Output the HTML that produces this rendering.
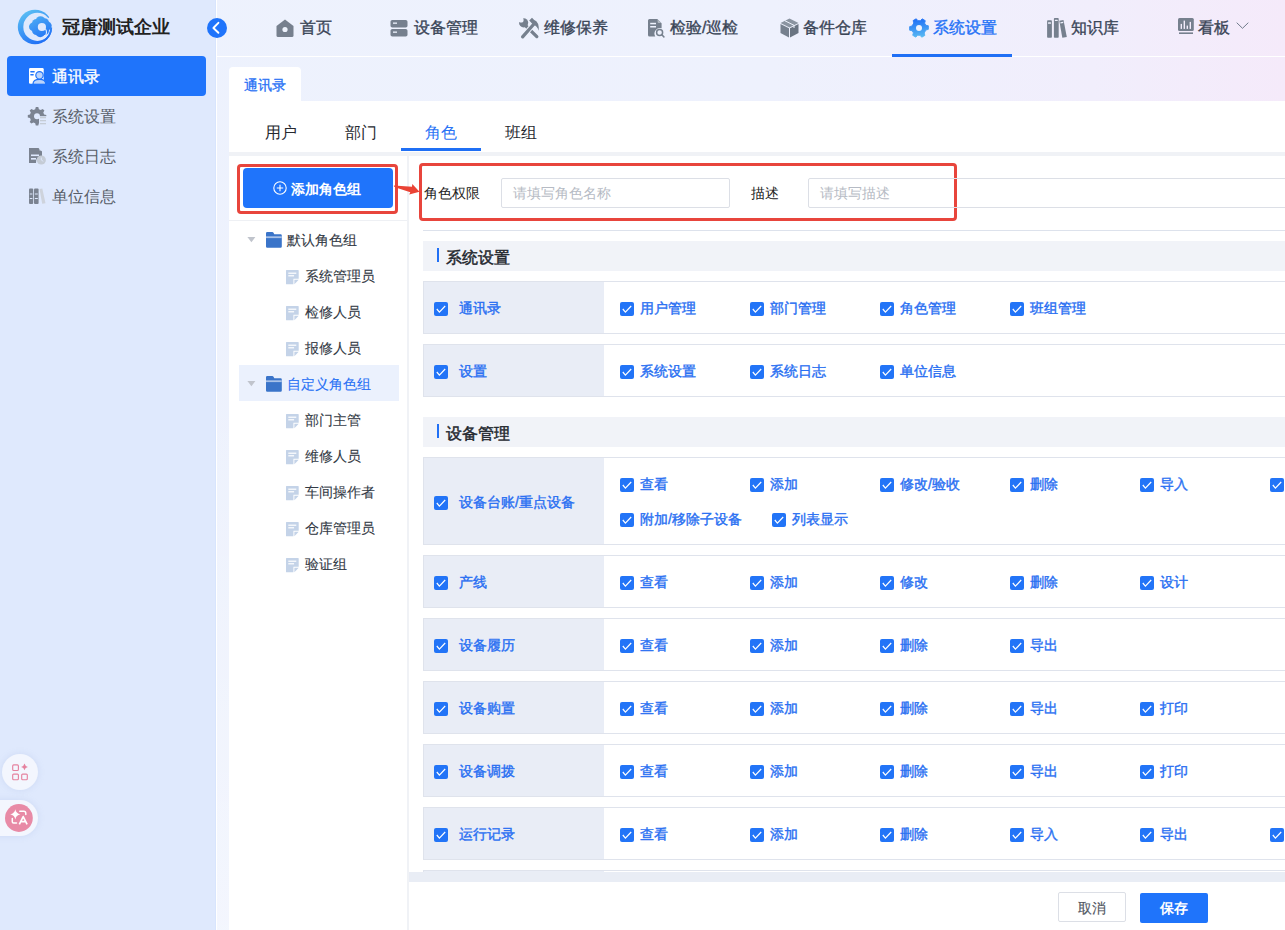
<!DOCTYPE html>
<html><head><meta charset="utf-8">
<style>
*{box-sizing:border-box;margin:0;padding:0}
html,body{width:1285px;height:930px;overflow:hidden}
body{font-family:"Liberation Sans",sans-serif;position:relative;background:linear-gradient(180deg,rgba(255,255,255,0) 0%,rgba(255,255,255,0) 40%,rgba(255,255,255,.35) 100%),linear-gradient(90deg,#edf2fd 0%,#eef1fd 60%,#f1eefc 85%,#f5eafa 100%)}
.abs{position:absolute}
#side{left:0;top:0;width:216px;height:930px;background:#dfe9fd;border-right:1px solid #d8e5fd}
#vline{left:216px;top:0;width:1px;height:930px;background:#fff}
#hline{left:217px;top:56px;width:1068px;height:1px;background:#fff}
.logo-t{left:62px;top:14px;font-size:18px;font-weight:bold;color:#222;line-height:26px;letter-spacing:0px}
.mi{left:7px;width:199px;height:40px;border-radius:4px;color:#575d68;font-size:16px;line-height:40px}
.mi .t{position:absolute;left:45px;top:0}
.mi svg{position:absolute;left:22px;top:12px}
.mi.on{background:#1f74fb;color:#fff}
.nav{top:14px;height:28px;font-size:16px;line-height:28px;color:#3a4557;white-space:nowrap;-webkit-text-stroke:0.35px currentColor}
.nav svg{position:absolute;top:5px}
.nav .t{position:absolute;top:0}
/*GEN*/
.w{background:#fff}
.tt{font-size:16px;line-height:24px;color:#26292f;white-space:nowrap}
.tr{font-size:14px;line-height:20px;color:#333a45;white-space:nowrap;-webkit-text-stroke:0.1px currentColor}
.cb{width:14px;height:14px;border-radius:2px;background:#2274f7}
.cb svg{position:absolute;left:0;top:0}
.pl{font-size:14px;line-height:20px;color:#2a70f2;white-space:nowrap;-webkit-text-stroke:0.4px #2a70f2}
.row{left:423px;width:880px;border:1px solid #dfe3ec;background:#fff}
.rowl{left:424px;width:180px;background:#e9edf6}
.hdr{left:423px;width:870px;height:30px;background:#f1f3f8}
.hdr .bar{position:absolute;left:14px;top:7px;width:2px;height:14px;background:#2170f5}
.hdr .t{position:absolute;left:23px;top:5px;font-size:16px;line-height:24px;color:#23272e;-webkit-text-stroke:0.45px #23272e}
/*/GEN*/</style></head><body>
<div id="side" class="abs"></div>
<div id="vline" class="abs"></div>
<div id="hline" class="abs"></div>
<!-- logo -->
<svg class="abs" style="left:17px;top:9px" width="36" height="36" viewBox="0 0 36 36">
<defs><linearGradient id="lg" gradientUnits="userSpaceOnUse" x1="6" y1="0" x2="24" y2="36"><stop offset="0" stop-color="#5fc4f3"/><stop offset="1" stop-color="#1d6cf6"/></linearGradient>
<mask id="lm"><rect width="36" height="36" fill="#fff"/><circle cx="20.4" cy="17.9" r="14.1" fill="#000"/><path d="M18 18 L38 4.5 L38 19Z" fill="#000"/></mask>
<mask id="bm"><rect width="36" height="36" fill="#fff"/><circle cx="24.9" cy="18" r="4.1" fill="#000"/></mask></defs>
<circle cx="18" cy="18" r="17.2" fill="url(#lg)" mask="url(#lm)"/>
<path d="M34.2 18.5 A16.3 16.3 0 0 1 26.5 32" stroke="url(#lg)" stroke-width="1.9" fill="none"/>
<g fill="url(#lg)" mask="url(#bm)"><circle cx="16.3" cy="17.8" r="4.3"/><circle cx="23.5" cy="12" r="4.8"/><circle cx="30.3" cy="16.8" r="4.4"/><circle cx="23.2" cy="23.3" r="4.9"/><circle cx="19.5" cy="14.5" r="4.5"/><circle cx="19.5" cy="21.5" r="4.5"/><circle cx="27.5" cy="21.5" r="4.5"/><circle cx="27.5" cy="13.8" r="4.5"/></g>
<path d="M28.6 20.2 Q30.8 23.5 27.8 27.6" stroke="#dfe9fd" stroke-width="1.1" fill="none" stroke-linecap="round"/>
</svg>
<div class="abs logo-t">冠唐测试企业</div>
<!-- collapse -->
<div class="abs" style="left:207px;top:18px;width:20px;height:20px;border-radius:50%;background:#1f74fb"></div>
<svg class="abs" style="left:207px;top:18px" width="20" height="20" viewBox="0 0 20 20"><path d="M11.4 4.8 L6.4 10 L11.4 14.8" stroke="#fff" stroke-width="1.9" fill="none" stroke-linecap="round" stroke-linejoin="round"/></svg>

<!-- sidebar menu -->
<div class="abs mi on" style="top:56px"><span class="t" style="top:1px;-webkit-text-stroke:0.35px #fff">通讯录</span></div>
<svg class="abs" style="left:28px;top:67px" width="19" height="19" viewBox="0 0 19 19"><rect x="1" y="1" width="14.7" height="15.8" rx="1.2" fill="#fff"/><rect x="2.2" y="4.1" width="4.6" height="1.3" rx="0.6" fill="#1f74fb"/><rect x="2.2" y="7.1" width="3.6" height="1.3" rx="0.6" fill="#1f74fb"/><path d="M5 17.3 Q5 12.3 11.5 12.3 Q17.8 12.3 17.8 17.3Z" fill="#bcd4fb" stroke="#1f74fb" stroke-width="1.2"/><circle cx="11.5" cy="8.3" r="3.7" fill="#bcd4fb" stroke="#1f74fb" stroke-width="1.2"/><rect x="4" y="16.9" width="15" height="2" fill="#1f74fb"/></svg>
<div class="abs mi" style="top:96px"><span class="t" style="top:1px">系统设置</span></div>
<svg class="abs" style="left:27px;top:106px" width="20" height="20" viewBox="0 0 20 20"><path d="M7.5 1 H10 L10.6 3.2 L12.4 4 L14.4 2.9 L16.1 4.6 L15 6.6 L15.8 8.4 L18 9 V11.5 L15.8 12.1 L15 13.9 L16.1 15.9 L14.4 17.6 L12.4 16.5 L10.6 17.3 L10 19.5 H7.5 L6.9 17.3 L5.1 16.5 L3.1 17.6 L1.4 15.9 L2.5 13.9 L1.7 12.1 L-0.5 11.5 V9 L1.7 8.4 L2.5 6.6 L1.4 4.6 L3.1 2.9 L5.1 4 L6.9 3.2Z" fill="#7b8391" transform="translate(1.3,0)"/><circle cx="10" cy="10.2" r="3" fill="#dfe9fd"/><rect x="12" y="10.2" width="8" height="9.5" fill="#dfe9fd"/><rect x="13" y="11" width="6" height="1.3" fill="#c5ccd6"/><rect x="13" y="14" width="6" height="1.3" fill="#c5ccd6"/><rect x="13" y="17" width="6" height="1.3" fill="#c5ccd6"/></svg>
<div class="abs mi" style="top:136px"><span class="t" style="top:1px">系统日志</span></div>
<svg class="abs" style="left:29px;top:147px" width="18" height="19" viewBox="0 0 18 19"><path d="M0 1 H9.5 L13 4.5 V9 A6 6 0 0 0 7 16 H0Z" fill="#7b8391"/><path d="M10.5 1 L13 3.5 H10.5Z" fill="#dfe9fd"/><rect x="2" y="7.5" width="8" height="1.6" fill="#dfe9fd"/><rect x="2" y="11" width="5" height="1.6" fill="#dfe9fd"/><circle cx="12.3" cy="13" r="4.6" fill="#c5ccd6"/><path d="M12.3 10.5 V13 L14.3 14.3" stroke="#dfe9fd" stroke-width="0.9" fill="none"/></svg>
<div class="abs mi" style="top:176px"><span class="t" style="top:1px">单位信息</span></div>
<svg class="abs" style="left:29px;top:188px" width="17" height="17" viewBox="0 0 17 17"><rect x="0" y="0.5" width="4.2" height="15.5" rx="1" fill="#7b8391"/><rect x="5" y="0.5" width="4.6" height="15.5" rx="1" fill="#7b8391"/><path d="M10.5 1 L13.3 0.6 L16.5 15.2 L13.2 15.8Z" fill="#ced3dc"/><rect x="0.8" y="5.5" width="2.6" height="1" fill="#dfe9fd"/><rect x="5.8" y="5.5" width="3" height="1" fill="#dfe9fd"/><rect x="0.8" y="10" width="2.6" height="1" fill="#dfe9fd"/><rect x="5.8" y="10" width="3" height="1" fill="#dfe9fd"/></svg>

<!-- floating buttons -->
<div class="abs" style="left:2px;top:754px;width:36px;height:36px;border-radius:50%;background:#f3f6fe;box-shadow:0 0 6px rgba(150,170,220,.25)"></div>
<svg class="abs" style="left:0px;top:745px" width="45" height="40" viewBox="0 0 45 40"><g fill="none" stroke="#e5829f" stroke-width="1.15"><rect x="12.7" y="19.9" width="5.7" height="5.6" rx="1"/><rect x="12.7" y="29.1" width="5.7" height="5.6" rx="1"/><rect x="21.7" y="29.1" width="5.6" height="5.6" rx="1"/></g><path d="M24.5 18.6 Q25.1 21.4 27.9 21.9 Q25.1 22.4 24.5 25.3 Q23.9 22.4 21.1 21.9 Q23.9 21.4 24.5 18.6Z" fill="#e5829f"/></svg>
<div class="abs" style="left:-20px;top:800px;width:58px;height:36px;border-radius:18px;background:#f3f6fe;box-shadow:0 0 6px rgba(150,170,220,.25)"></div>
<svg class="abs" style="left:0px;top:800px" width="40" height="36" viewBox="0 0 40 36"><circle cx="18.9" cy="18" r="13.9" fill="#e88aa6"/><path d="M15.3 9.2 Q16 13.4 20.4 14.3 Q16 15.2 15.3 19.6 Q14.6 15.2 10.2 14.3 Q14.6 13.4 15.3 9.2Z" fill="#fff"/><path d="M19.8 11.3 H23.8 Q25.8 11.3 25.8 13.5 V14.5" stroke="#fff" stroke-width="1.5" fill="none" stroke-linecap="round"/><path d="M12.3 18.5 V21.8 Q12.3 23 13.5 23 H16.5" stroke="#fff" stroke-width="1.5" fill="none" stroke-linecap="round"/><path d="M19.3 24.3 L23.2 16.6 L27.1 24.3 M20.6 21.7 H25.8" stroke="#fff" stroke-width="1.7" fill="none" stroke-linejoin="round"/></svg>

<!-- NAV -->
<svg class="abs" style="left:276px;top:19px" width="18" height="18" viewBox="0 0 18 18"><path d="M9 0.5 L17.5 7 V16.5 Q17.5 18 16 18 H2 Q0.5 18 0.5 16.5 V7Z" fill="#76808e"/><circle cx="9" cy="10.5" r="2.6" fill="#eef3fd"/></svg>
<div class="abs nav" style="left:300px">首页</div>
<svg class="abs" style="left:390px;top:19px" width="18" height="18" viewBox="0 0 18 18"><rect x="0.5" y="1" width="17" height="7.5" rx="1.8" fill="#76808e"/><rect x="0.5" y="10" width="17" height="7.5" rx="1.8" fill="#76808e"/><rect x="3" y="3.5" width="4" height="1.3" fill="#eef3fd"/><rect x="3" y="12.5" width="4" height="1.3" fill="#eef3fd"/></svg>
<div class="abs nav" style="left:414px">设备管理</div>
<svg class="abs" style="left:514px;top:12px" width="30" height="30" viewBox="0 0 30 30"><defs><mask id="wm"><rect width="30" height="30" fill="#fff"/><circle cx="7" cy="7.9" r="2.6" fill="#000"/></mask></defs><g mask="url(#wm)"><circle cx="9.6" cy="10.8" r="4.6" fill="#76808e"/></g><path d="M12 14 L22.8 24.6" stroke="#76808e" stroke-width="3.3" stroke-linecap="round"/><path d="M19.5 12.5 L8.6 24.8" stroke="#eef2fd" stroke-width="5.2"/><path d="M19.5 12.5 L8.6 24.8" stroke="#76808e" stroke-width="3.3" stroke-linecap="round"/><path d="M15.2 8.4 L18 5.8 L20.2 7.9 Q25.2 9.5 24.8 18.8 Q23 13.5 19.4 12.9Z" fill="#76808e"/></svg>
<div class="abs nav" style="left:544px">维修保养</div>
<svg class="abs" style="left:647px;top:18px" width="18" height="20" viewBox="0 0 18 20"><path d="M1 2.5 Q1 1 2.5 1 H10.3 L14.6 5.3 V10.3 A5.6 5.6 0 0 0 8.3 18.6 H2.5 Q1 18.6 1 17.1Z" fill="#76808e"/><path d="M10.6 1.4 L14.2 5 H11.6 Q10.6 5 10.6 4Z" fill="#b3bac4"/><rect x="3.2" y="4.8" width="5.8" height="1.5" fill="#eef2fd"/><rect x="3.2" y="8" width="5.8" height="1.5" fill="#eef2fd"/><circle cx="12.6" cy="14.6" r="3" fill="none" stroke="#76808e" stroke-width="1.5"/><path d="M14.8 16.8 L16.9 18.9" stroke="#76808e" stroke-width="1.5" stroke-linecap="round"/></svg>
<div class="abs nav" style="left:670px">检验/巡检</div>
<svg class="abs" style="left:780px;top:18px" width="19" height="20" viewBox="0 0 19 20"><path d="M9.5 0.5 L18.5 5 L9.5 9.5 L0.5 5Z" fill="#8b94a1"/><path d="M0.5 6 L9 10.3 V19.5 L0.5 15Z" fill="#76808e"/><path d="M18.5 6 L10 10.3 V19.5 L18.5 15Z" fill="#6a7482"/><path d="M5 2.8 L14 7.3 V10" stroke="#eef3fd" stroke-width="1" fill="none"/></svg>
<div class="abs nav" style="left:803px">备件仓库</div>
<svg class="abs" style="left:909px;top:18px" width="20" height="20" viewBox="0 0 20 20"><defs><linearGradient id="gg" x1="0.2" y1="0.1" x2="0.8" y2="0.95"><stop offset="0" stop-color="#1f6ff6"/><stop offset="1" stop-color="#5cbdf2"/></linearGradient></defs><path d="M8.2 0.5 H11.8 L12.4 3 L14.6 4.2 L17 3.4 L18.8 6.5 L17 8.3 V11.7 L18.8 13.5 L17 16.6 L14.6 15.8 L12.4 17 L11.8 19.5 H8.2 L7.6 17 L5.4 15.8 L3 16.6 L1.2 13.5 L3 11.7 V8.3 L1.2 6.5 L3 3.4 L5.4 4.2 L7.6 3Z" fill="url(#gg)" stroke="url(#gg)" stroke-width="0.8" stroke-linejoin="round" transform="rotate(30 10 10)"/><circle cx="10" cy="10" r="3" fill="#eef2fd"/></svg>
<div class="abs nav" style="left:933px;color:#2572f6">系统设置</div>
<div class="abs" style="left:892px;top:54px;width:120px;height:3px;background:#1f6ff5"></div>
<svg class="abs" style="left:1046px;top:17px" width="22" height="22" viewBox="0 0 22 22"><rect x="1.1" y="3.2" width="4.8" height="17.6" rx="0.8" fill="#76808e"/><rect x="7.9" y="1" width="4.8" height="19.8" rx="0.8" fill="#76808e"/><path d="M13.3 3.8 L17.5 3 L20.8 20 L16.3 20.8Z" fill="#76808e"/><rect x="2" y="5.2" width="3" height="1.6" rx="0.6" fill="#eef0fc"/><rect x="8.8" y="2.8" width="3" height="1.3" rx="0.6" fill="#eef0fc"/><path d="M14.3 5.3 L17.1 4.8 L17.3 5.9 L14.5 6.4Z" fill="#eef0fc"/></svg>
<div class="abs nav" style="left:1071px">知识库</div>
<svg class="abs" style="left:1178px;top:18px" width="16" height="16" viewBox="0 0 16 16"><rect x="0" y="0" width="15.8" height="12.9" rx="1.5" fill="#76808e"/><rect x="2.6" y="5.9" width="1.4" height="5" fill="#f3ecfb"/><rect x="5.6" y="2.6" width="1.4" height="8.3" fill="#f3ecfb"/><rect x="8.6" y="7.6" width="1.4" height="3.3" fill="#f3ecfb"/><rect x="11.6" y="3.9" width="1.4" height="7" fill="#f3ecfb"/><rect x="1" y="14.4" width="14" height="1.6" fill="#76808e"/></svg>
<div class="abs nav" style="left:1198px">看板</div>
<svg class="abs" style="left:1236px;top:22px" width="13" height="8" viewBox="0 0 13 8"><path d="M0.7 0.7 L6.5 6.3 L12.3 0.7" stroke="#6f7a8a" stroke-width="1" fill="none"/></svg>
<!-- CONTENT -->
<div class="abs w" style="left:229px;top:67px;width:72px;height:34px;border-radius:4px 4px 0 0"></div>
<div class="abs" style="left:244px;top:75px;font-size:14px;line-height:20px;color:#2a72f5;white-space:nowrap;-webkit-text-stroke:0.3px #2a72f5">通讯录</div>
<div class="abs w" style="left:229px;top:101px;width:1056px;height:829px"></div>
<div class="abs tt" style="left:265px;top:121px;color:#26292f">用户</div>
<div class="abs tt" style="left:345px;top:121px;color:#26292f">部门</div>
<div class="abs tt" style="left:425px;top:121px;color:#2a72f5">角色</div>
<div class="abs tt" style="left:505px;top:121px;color:#26292f">班组</div>
<div class="abs" style="left:401px;top:148px;width:80px;height:3px;background:#1f6ff5"></div>
<div class="abs" style="left:229px;top:152px;width:1056px;height:4px;background:#f0f2f6"></div>
<div class="abs" style="left:407px;top:156px;width:2px;height:774px;background:#f0f2f6"></div>
<div class="abs" style="left:229px;top:220px;width:178px;height:1px;background:#eef0f4"></div>
<div class="abs" style="left:237px;top:164px;width:161px;height:50px;border:3px solid #e8453c;border-radius:4px"></div>
<div class="abs" style="left:243px;top:168px;width:150px;height:40px;border-radius:4px;background:#1f74fb"></div>
<svg class="abs" style="left:273px;top:181px" width="14" height="14" viewBox="0 0 14 14"><circle cx="7" cy="7" r="6.2" stroke="#fff" stroke-width="1.1" fill="none"/><path d="M7 3.8 V10.2 M3.8 7 H10.2" stroke="#fff" stroke-width="1.1"/></svg>
<div class="abs" style="left:291px;top:179px;font-size:14px;line-height:20px;color:#fff;font-weight:bold;white-space:nowrap">添加角色组</div>
<svg class="abs" style="left:390px;top:175px" width="32" height="25" viewBox="0 0 32 25"><path d="M3.9 10.4 L22 11.8 L22.3 9 L29.5 16.8 L19.2 19.6 L20.3 17.2 L8 13.2 L3.9 11.6Z" fill="#ea4335"/></svg>
<div class="abs" style="left:419px;top:163px;width:538px;height:58px;border:3px solid #e8453c;border-radius:4px"></div>
<div class="abs" style="left:424px;top:183px;font-size:14px;line-height:20px;color:#222;white-space:nowrap">角色权限</div>
<div class="abs" style="left:501px;top:178px;width:229px;height:30px;border:1px solid #dcdfe6;border-radius:2px"></div>
<div class="abs" style="left:513px;top:183px;font-size:14px;line-height:20px;color:#b6bbc4;white-space:nowrap">请填写角色名称</div>
<div class="abs" style="left:751px;top:183px;font-size:14px;line-height:20px;color:#222;white-space:nowrap">描述</div>
<div class="abs" style="left:808px;top:178px;width:500px;height:30px;border:1px solid #dcdfe6;border-radius:2px"></div>
<div class="abs" style="left:820px;top:183px;font-size:14px;line-height:20px;color:#b6bbc4;white-space:nowrap">请填写描述</div>
<div class="abs" style="left:423px;top:230px;width:862px;height:1px;background:#dde2ec"></div>
<div class="abs" style="left:239px;top:365px;width:160px;height:36px;background:#ebf1fd"></div>
<div class="abs" style="left:247px;top:237px;line-height:0"><svg width="9" height="6" viewBox="0 0 9 6"><path d="M0.4 0 H8.4 L4.4 5.2Z" fill="#c0c4cc"/></svg></div>
<div class="abs" style="left:266px;top:232px;line-height:0"><svg width="16" height="16" viewBox="0 0 16 16"><path d="M0 1.2 Q0 0 1.2 0 H6.3 Q7.1 0 7.5 0.8 L8.3 2.3 H14.6 Q15.8 2.3 15.8 3.5 V14.6 Q15.8 15.8 14.6 15.8 H1.2 Q0 15.8 0 14.6Z" fill="#3a74c9"/><rect x="0" y="4.3" width="15.8" height="1.8" fill="#a9c2e8"/></svg></div>
<div class="abs tr" style="left:287px;top:230px;color:#333a45">默认角色组</div>
<div class="abs" style="left:286px;top:270px;line-height:0"><svg width="14" height="15" viewBox="0 0 14 15"><path d="M0 0.6 Q0 0 0.6 0 H12.1 Q12.7 0 12.7 0.6 V8.7 H7.4 V14.3 H0.6 Q0 14.3 0 13.7Z" fill="#c4d3e8"/><path d="M8.4 9.7 H12.7 L8.4 14.3Z" fill="#c4d3e8"/><rect x="2.3" y="2.6" width="8" height="1.2" fill="#fff"/><rect x="2.3" y="5.2" width="5.8" height="1.2" fill="#fff"/></svg></div>
<div class="abs tr" style="left:305px;top:266px">系统管理员</div>
<div class="abs" style="left:286px;top:306px;line-height:0"><svg width="14" height="15" viewBox="0 0 14 15"><path d="M0 0.6 Q0 0 0.6 0 H12.1 Q12.7 0 12.7 0.6 V8.7 H7.4 V14.3 H0.6 Q0 14.3 0 13.7Z" fill="#c4d3e8"/><path d="M8.4 9.7 H12.7 L8.4 14.3Z" fill="#c4d3e8"/><rect x="2.3" y="2.6" width="8" height="1.2" fill="#fff"/><rect x="2.3" y="5.2" width="5.8" height="1.2" fill="#fff"/></svg></div>
<div class="abs tr" style="left:305px;top:302px">检修人员</div>
<div class="abs" style="left:286px;top:342px;line-height:0"><svg width="14" height="15" viewBox="0 0 14 15"><path d="M0 0.6 Q0 0 0.6 0 H12.1 Q12.7 0 12.7 0.6 V8.7 H7.4 V14.3 H0.6 Q0 14.3 0 13.7Z" fill="#c4d3e8"/><path d="M8.4 9.7 H12.7 L8.4 14.3Z" fill="#c4d3e8"/><rect x="2.3" y="2.6" width="8" height="1.2" fill="#fff"/><rect x="2.3" y="5.2" width="5.8" height="1.2" fill="#fff"/></svg></div>
<div class="abs tr" style="left:305px;top:338px">报修人员</div>
<div class="abs" style="left:247px;top:381px;line-height:0"><svg width="9" height="6" viewBox="0 0 9 6"><path d="M0.4 0 H8.4 L4.4 5.2Z" fill="#c0c4cc"/></svg></div>
<div class="abs" style="left:266px;top:376px;line-height:0"><svg width="16" height="16" viewBox="0 0 16 16"><path d="M0 1.2 Q0 0 1.2 0 H6.3 Q7.1 0 7.5 0.8 L8.3 2.3 H14.6 Q15.8 2.3 15.8 3.5 V14.6 Q15.8 15.8 14.6 15.8 H1.2 Q0 15.8 0 14.6Z" fill="#3a74c9"/><rect x="0" y="4.3" width="15.8" height="1.8" fill="#a9c2e8"/></svg></div>
<div class="abs tr" style="left:287px;top:374px;color:#2a72f5">自定义角色组</div>
<div class="abs" style="left:286px;top:414px;line-height:0"><svg width="14" height="15" viewBox="0 0 14 15"><path d="M0 0.6 Q0 0 0.6 0 H12.1 Q12.7 0 12.7 0.6 V8.7 H7.4 V14.3 H0.6 Q0 14.3 0 13.7Z" fill="#c4d3e8"/><path d="M8.4 9.7 H12.7 L8.4 14.3Z" fill="#c4d3e8"/><rect x="2.3" y="2.6" width="8" height="1.2" fill="#fff"/><rect x="2.3" y="5.2" width="5.8" height="1.2" fill="#fff"/></svg></div>
<div class="abs tr" style="left:305px;top:410px">部门主管</div>
<div class="abs" style="left:286px;top:450px;line-height:0"><svg width="14" height="15" viewBox="0 0 14 15"><path d="M0 0.6 Q0 0 0.6 0 H12.1 Q12.7 0 12.7 0.6 V8.7 H7.4 V14.3 H0.6 Q0 14.3 0 13.7Z" fill="#c4d3e8"/><path d="M8.4 9.7 H12.7 L8.4 14.3Z" fill="#c4d3e8"/><rect x="2.3" y="2.6" width="8" height="1.2" fill="#fff"/><rect x="2.3" y="5.2" width="5.8" height="1.2" fill="#fff"/></svg></div>
<div class="abs tr" style="left:305px;top:446px">维修人员</div>
<div class="abs" style="left:286px;top:486px;line-height:0"><svg width="14" height="15" viewBox="0 0 14 15"><path d="M0 0.6 Q0 0 0.6 0 H12.1 Q12.7 0 12.7 0.6 V8.7 H7.4 V14.3 H0.6 Q0 14.3 0 13.7Z" fill="#c4d3e8"/><path d="M8.4 9.7 H12.7 L8.4 14.3Z" fill="#c4d3e8"/><rect x="2.3" y="2.6" width="8" height="1.2" fill="#fff"/><rect x="2.3" y="5.2" width="5.8" height="1.2" fill="#fff"/></svg></div>
<div class="abs tr" style="left:305px;top:482px">车间操作者</div>
<div class="abs" style="left:286px;top:522px;line-height:0"><svg width="14" height="15" viewBox="0 0 14 15"><path d="M0 0.6 Q0 0 0.6 0 H12.1 Q12.7 0 12.7 0.6 V8.7 H7.4 V14.3 H0.6 Q0 14.3 0 13.7Z" fill="#c4d3e8"/><path d="M8.4 9.7 H12.7 L8.4 14.3Z" fill="#c4d3e8"/><rect x="2.3" y="2.6" width="8" height="1.2" fill="#fff"/><rect x="2.3" y="5.2" width="5.8" height="1.2" fill="#fff"/></svg></div>
<div class="abs tr" style="left:305px;top:518px">仓库管理员</div>
<div class="abs" style="left:286px;top:558px;line-height:0"><svg width="14" height="15" viewBox="0 0 14 15"><path d="M0 0.6 Q0 0 0.6 0 H12.1 Q12.7 0 12.7 0.6 V8.7 H7.4 V14.3 H0.6 Q0 14.3 0 13.7Z" fill="#c4d3e8"/><path d="M8.4 9.7 H12.7 L8.4 14.3Z" fill="#c4d3e8"/><rect x="2.3" y="2.6" width="8" height="1.2" fill="#fff"/><rect x="2.3" y="5.2" width="5.8" height="1.2" fill="#fff"/></svg></div>
<div class="abs tr" style="left:305px;top:554px">验证组</div>
<div class="abs hdr" style="top:241px"><div class="bar"></div><div class="t">系统设置</div></div>
<div class="abs row" style="top:281px;height:53px"></div>
<div class="abs rowl" style="top:282px;height:51px"></div>
<div class="abs cb" style="left:434px;top:302px"><svg width="14" height="14" viewBox="0 0 14 14"><path d="M2.8 7 L5.4 10.2 L11.2 4" stroke="#fff" stroke-width="1.2" fill="none"/></svg></div>
<div class="abs pl" style="left:459px;top:298px">通讯录</div>
<div class="abs cb" style="left:620px;top:302px"><svg width="14" height="14" viewBox="0 0 14 14"><path d="M2.8 7 L5.4 10.2 L11.2 4" stroke="#fff" stroke-width="1.2" fill="none"/></svg></div>
<div class="abs pl" style="left:640px;top:298px">用户管理</div>
<div class="abs cb" style="left:750px;top:302px"><svg width="14" height="14" viewBox="0 0 14 14"><path d="M2.8 7 L5.4 10.2 L11.2 4" stroke="#fff" stroke-width="1.2" fill="none"/></svg></div>
<div class="abs pl" style="left:770px;top:298px">部门管理</div>
<div class="abs cb" style="left:880px;top:302px"><svg width="14" height="14" viewBox="0 0 14 14"><path d="M2.8 7 L5.4 10.2 L11.2 4" stroke="#fff" stroke-width="1.2" fill="none"/></svg></div>
<div class="abs pl" style="left:900px;top:298px">角色管理</div>
<div class="abs cb" style="left:1010px;top:302px"><svg width="14" height="14" viewBox="0 0 14 14"><path d="M2.8 7 L5.4 10.2 L11.2 4" stroke="#fff" stroke-width="1.2" fill="none"/></svg></div>
<div class="abs pl" style="left:1030px;top:298px">班组管理</div>
<div class="abs row" style="top:344px;height:53px"></div>
<div class="abs rowl" style="top:345px;height:51px"></div>
<div class="abs cb" style="left:434px;top:365px"><svg width="14" height="14" viewBox="0 0 14 14"><path d="M2.8 7 L5.4 10.2 L11.2 4" stroke="#fff" stroke-width="1.2" fill="none"/></svg></div>
<div class="abs pl" style="left:459px;top:361px">设置</div>
<div class="abs cb" style="left:620px;top:365px"><svg width="14" height="14" viewBox="0 0 14 14"><path d="M2.8 7 L5.4 10.2 L11.2 4" stroke="#fff" stroke-width="1.2" fill="none"/></svg></div>
<div class="abs pl" style="left:640px;top:361px">系统设置</div>
<div class="abs cb" style="left:750px;top:365px"><svg width="14" height="14" viewBox="0 0 14 14"><path d="M2.8 7 L5.4 10.2 L11.2 4" stroke="#fff" stroke-width="1.2" fill="none"/></svg></div>
<div class="abs pl" style="left:770px;top:361px">系统日志</div>
<div class="abs cb" style="left:880px;top:365px"><svg width="14" height="14" viewBox="0 0 14 14"><path d="M2.8 7 L5.4 10.2 L11.2 4" stroke="#fff" stroke-width="1.2" fill="none"/></svg></div>
<div class="abs pl" style="left:900px;top:361px">单位信息</div>
<div class="abs hdr" style="top:417px"><div class="bar"></div><div class="t">设备管理</div></div>
<div class="abs row" style="top:457px;height:88px"></div>
<div class="abs rowl" style="top:458px;height:86px"></div>
<div class="abs cb" style="left:434px;top:496px"><svg width="14" height="14" viewBox="0 0 14 14"><path d="M2.8 7 L5.4 10.2 L11.2 4" stroke="#fff" stroke-width="1.2" fill="none"/></svg></div>
<div class="abs pl" style="left:459px;top:492px">设备台账/重点设备</div>
<div class="abs cb" style="left:620px;top:478px"><svg width="14" height="14" viewBox="0 0 14 14"><path d="M2.8 7 L5.4 10.2 L11.2 4" stroke="#fff" stroke-width="1.2" fill="none"/></svg></div>
<div class="abs pl" style="left:640px;top:474px">查看</div>
<div class="abs cb" style="left:750px;top:478px"><svg width="14" height="14" viewBox="0 0 14 14"><path d="M2.8 7 L5.4 10.2 L11.2 4" stroke="#fff" stroke-width="1.2" fill="none"/></svg></div>
<div class="abs pl" style="left:770px;top:474px">添加</div>
<div class="abs cb" style="left:880px;top:478px"><svg width="14" height="14" viewBox="0 0 14 14"><path d="M2.8 7 L5.4 10.2 L11.2 4" stroke="#fff" stroke-width="1.2" fill="none"/></svg></div>
<div class="abs pl" style="left:900px;top:474px">修改/验收</div>
<div class="abs cb" style="left:1010px;top:478px"><svg width="14" height="14" viewBox="0 0 14 14"><path d="M2.8 7 L5.4 10.2 L11.2 4" stroke="#fff" stroke-width="1.2" fill="none"/></svg></div>
<div class="abs pl" style="left:1030px;top:474px">删除</div>
<div class="abs cb" style="left:1140px;top:478px"><svg width="14" height="14" viewBox="0 0 14 14"><path d="M2.8 7 L5.4 10.2 L11.2 4" stroke="#fff" stroke-width="1.2" fill="none"/></svg></div>
<div class="abs pl" style="left:1160px;top:474px">导入</div>
<div class="abs cb" style="left:1270px;top:478px"><svg width="14" height="14" viewBox="0 0 14 14"><path d="M2.8 7 L5.4 10.2 L11.2 4" stroke="#fff" stroke-width="1.2" fill="none"/></svg></div>
<div class="abs pl" style="left:1290px;top:474px">导出</div>
<div class="abs cb" style="left:620px;top:513px"><svg width="14" height="14" viewBox="0 0 14 14"><path d="M2.8 7 L5.4 10.2 L11.2 4" stroke="#fff" stroke-width="1.2" fill="none"/></svg></div>
<div class="abs pl" style="left:640px;top:509px">附加/移除子设备</div>
<div class="abs cb" style="left:772px;top:513px"><svg width="14" height="14" viewBox="0 0 14 14"><path d="M2.8 7 L5.4 10.2 L11.2 4" stroke="#fff" stroke-width="1.2" fill="none"/></svg></div>
<div class="abs pl" style="left:792px;top:509px">列表显示</div>
<div class="abs row" style="top:555px;height:53px"></div>
<div class="abs rowl" style="top:556px;height:51px"></div>
<div class="abs cb" style="left:434px;top:576px"><svg width="14" height="14" viewBox="0 0 14 14"><path d="M2.8 7 L5.4 10.2 L11.2 4" stroke="#fff" stroke-width="1.2" fill="none"/></svg></div>
<div class="abs pl" style="left:459px;top:572px">产线</div>
<div class="abs cb" style="left:620px;top:576px"><svg width="14" height="14" viewBox="0 0 14 14"><path d="M2.8 7 L5.4 10.2 L11.2 4" stroke="#fff" stroke-width="1.2" fill="none"/></svg></div>
<div class="abs pl" style="left:640px;top:572px">查看</div>
<div class="abs cb" style="left:750px;top:576px"><svg width="14" height="14" viewBox="0 0 14 14"><path d="M2.8 7 L5.4 10.2 L11.2 4" stroke="#fff" stroke-width="1.2" fill="none"/></svg></div>
<div class="abs pl" style="left:770px;top:572px">添加</div>
<div class="abs cb" style="left:880px;top:576px"><svg width="14" height="14" viewBox="0 0 14 14"><path d="M2.8 7 L5.4 10.2 L11.2 4" stroke="#fff" stroke-width="1.2" fill="none"/></svg></div>
<div class="abs pl" style="left:900px;top:572px">修改</div>
<div class="abs cb" style="left:1010px;top:576px"><svg width="14" height="14" viewBox="0 0 14 14"><path d="M2.8 7 L5.4 10.2 L11.2 4" stroke="#fff" stroke-width="1.2" fill="none"/></svg></div>
<div class="abs pl" style="left:1030px;top:572px">删除</div>
<div class="abs cb" style="left:1140px;top:576px"><svg width="14" height="14" viewBox="0 0 14 14"><path d="M2.8 7 L5.4 10.2 L11.2 4" stroke="#fff" stroke-width="1.2" fill="none"/></svg></div>
<div class="abs pl" style="left:1160px;top:572px">设计</div>
<div class="abs row" style="top:618px;height:53px"></div>
<div class="abs rowl" style="top:619px;height:51px"></div>
<div class="abs cb" style="left:434px;top:639px"><svg width="14" height="14" viewBox="0 0 14 14"><path d="M2.8 7 L5.4 10.2 L11.2 4" stroke="#fff" stroke-width="1.2" fill="none"/></svg></div>
<div class="abs pl" style="left:459px;top:635px">设备履历</div>
<div class="abs cb" style="left:620px;top:639px"><svg width="14" height="14" viewBox="0 0 14 14"><path d="M2.8 7 L5.4 10.2 L11.2 4" stroke="#fff" stroke-width="1.2" fill="none"/></svg></div>
<div class="abs pl" style="left:640px;top:635px">查看</div>
<div class="abs cb" style="left:750px;top:639px"><svg width="14" height="14" viewBox="0 0 14 14"><path d="M2.8 7 L5.4 10.2 L11.2 4" stroke="#fff" stroke-width="1.2" fill="none"/></svg></div>
<div class="abs pl" style="left:770px;top:635px">添加</div>
<div class="abs cb" style="left:880px;top:639px"><svg width="14" height="14" viewBox="0 0 14 14"><path d="M2.8 7 L5.4 10.2 L11.2 4" stroke="#fff" stroke-width="1.2" fill="none"/></svg></div>
<div class="abs pl" style="left:900px;top:635px">删除</div>
<div class="abs cb" style="left:1010px;top:639px"><svg width="14" height="14" viewBox="0 0 14 14"><path d="M2.8 7 L5.4 10.2 L11.2 4" stroke="#fff" stroke-width="1.2" fill="none"/></svg></div>
<div class="abs pl" style="left:1030px;top:635px">导出</div>
<div class="abs row" style="top:681px;height:53px"></div>
<div class="abs rowl" style="top:682px;height:51px"></div>
<div class="abs cb" style="left:434px;top:702px"><svg width="14" height="14" viewBox="0 0 14 14"><path d="M2.8 7 L5.4 10.2 L11.2 4" stroke="#fff" stroke-width="1.2" fill="none"/></svg></div>
<div class="abs pl" style="left:459px;top:698px">设备购置</div>
<div class="abs cb" style="left:620px;top:702px"><svg width="14" height="14" viewBox="0 0 14 14"><path d="M2.8 7 L5.4 10.2 L11.2 4" stroke="#fff" stroke-width="1.2" fill="none"/></svg></div>
<div class="abs pl" style="left:640px;top:698px">查看</div>
<div class="abs cb" style="left:750px;top:702px"><svg width="14" height="14" viewBox="0 0 14 14"><path d="M2.8 7 L5.4 10.2 L11.2 4" stroke="#fff" stroke-width="1.2" fill="none"/></svg></div>
<div class="abs pl" style="left:770px;top:698px">添加</div>
<div class="abs cb" style="left:880px;top:702px"><svg width="14" height="14" viewBox="0 0 14 14"><path d="M2.8 7 L5.4 10.2 L11.2 4" stroke="#fff" stroke-width="1.2" fill="none"/></svg></div>
<div class="abs pl" style="left:900px;top:698px">删除</div>
<div class="abs cb" style="left:1010px;top:702px"><svg width="14" height="14" viewBox="0 0 14 14"><path d="M2.8 7 L5.4 10.2 L11.2 4" stroke="#fff" stroke-width="1.2" fill="none"/></svg></div>
<div class="abs pl" style="left:1030px;top:698px">导出</div>
<div class="abs cb" style="left:1140px;top:702px"><svg width="14" height="14" viewBox="0 0 14 14"><path d="M2.8 7 L5.4 10.2 L11.2 4" stroke="#fff" stroke-width="1.2" fill="none"/></svg></div>
<div class="abs pl" style="left:1160px;top:698px">打印</div>
<div class="abs row" style="top:744px;height:53px"></div>
<div class="abs rowl" style="top:745px;height:51px"></div>
<div class="abs cb" style="left:434px;top:765px"><svg width="14" height="14" viewBox="0 0 14 14"><path d="M2.8 7 L5.4 10.2 L11.2 4" stroke="#fff" stroke-width="1.2" fill="none"/></svg></div>
<div class="abs pl" style="left:459px;top:761px">设备调拨</div>
<div class="abs cb" style="left:620px;top:765px"><svg width="14" height="14" viewBox="0 0 14 14"><path d="M2.8 7 L5.4 10.2 L11.2 4" stroke="#fff" stroke-width="1.2" fill="none"/></svg></div>
<div class="abs pl" style="left:640px;top:761px">查看</div>
<div class="abs cb" style="left:750px;top:765px"><svg width="14" height="14" viewBox="0 0 14 14"><path d="M2.8 7 L5.4 10.2 L11.2 4" stroke="#fff" stroke-width="1.2" fill="none"/></svg></div>
<div class="abs pl" style="left:770px;top:761px">添加</div>
<div class="abs cb" style="left:880px;top:765px"><svg width="14" height="14" viewBox="0 0 14 14"><path d="M2.8 7 L5.4 10.2 L11.2 4" stroke="#fff" stroke-width="1.2" fill="none"/></svg></div>
<div class="abs pl" style="left:900px;top:761px">删除</div>
<div class="abs cb" style="left:1010px;top:765px"><svg width="14" height="14" viewBox="0 0 14 14"><path d="M2.8 7 L5.4 10.2 L11.2 4" stroke="#fff" stroke-width="1.2" fill="none"/></svg></div>
<div class="abs pl" style="left:1030px;top:761px">导出</div>
<div class="abs cb" style="left:1140px;top:765px"><svg width="14" height="14" viewBox="0 0 14 14"><path d="M2.8 7 L5.4 10.2 L11.2 4" stroke="#fff" stroke-width="1.2" fill="none"/></svg></div>
<div class="abs pl" style="left:1160px;top:761px">打印</div>
<div class="abs row" style="top:807px;height:53px"></div>
<div class="abs rowl" style="top:808px;height:51px"></div>
<div class="abs cb" style="left:434px;top:828px"><svg width="14" height="14" viewBox="0 0 14 14"><path d="M2.8 7 L5.4 10.2 L11.2 4" stroke="#fff" stroke-width="1.2" fill="none"/></svg></div>
<div class="abs pl" style="left:459px;top:824px">运行记录</div>
<div class="abs cb" style="left:620px;top:828px"><svg width="14" height="14" viewBox="0 0 14 14"><path d="M2.8 7 L5.4 10.2 L11.2 4" stroke="#fff" stroke-width="1.2" fill="none"/></svg></div>
<div class="abs pl" style="left:640px;top:824px">查看</div>
<div class="abs cb" style="left:750px;top:828px"><svg width="14" height="14" viewBox="0 0 14 14"><path d="M2.8 7 L5.4 10.2 L11.2 4" stroke="#fff" stroke-width="1.2" fill="none"/></svg></div>
<div class="abs pl" style="left:770px;top:824px">添加</div>
<div class="abs cb" style="left:880px;top:828px"><svg width="14" height="14" viewBox="0 0 14 14"><path d="M2.8 7 L5.4 10.2 L11.2 4" stroke="#fff" stroke-width="1.2" fill="none"/></svg></div>
<div class="abs pl" style="left:900px;top:824px">删除</div>
<div class="abs cb" style="left:1010px;top:828px"><svg width="14" height="14" viewBox="0 0 14 14"><path d="M2.8 7 L5.4 10.2 L11.2 4" stroke="#fff" stroke-width="1.2" fill="none"/></svg></div>
<div class="abs pl" style="left:1030px;top:824px">导入</div>
<div class="abs cb" style="left:1140px;top:828px"><svg width="14" height="14" viewBox="0 0 14 14"><path d="M2.8 7 L5.4 10.2 L11.2 4" stroke="#fff" stroke-width="1.2" fill="none"/></svg></div>
<div class="abs pl" style="left:1160px;top:824px">导出</div>
<div class="abs cb" style="left:1270px;top:828px"><svg width="14" height="14" viewBox="0 0 14 14"><path d="M2.8 7 L5.4 10.2 L11.2 4" stroke="#fff" stroke-width="1.2" fill="none"/></svg></div>
<div class="abs pl" style="left:1290px;top:824px">打印</div>
<div class="abs row" style="top:870px;height:53px"></div>
<div class="abs rowl" style="top:871px;height:51px"></div>
<div class="abs cb" style="left:434px;top:891px"><svg width="14" height="14" viewBox="0 0 14 14"><path d="M2.8 7 L5.4 10.2 L11.2 4" stroke="#fff" stroke-width="1.2" fill="none"/></svg></div>
<div class="abs pl" style="left:459px;top:887px">运行记录</div>
<div class="abs" style="left:409px;top:872px;width:876px;height:10px;background:#e9edf5"></div>
<div class="abs w" style="left:409px;top:882px;width:876px;height:48px"></div>
<div class="abs" style="left:1058px;top:892px;width:68px;height:30px;border:1px solid #dcdfe6;border-radius:2px;background:#fff"></div>
<div class="abs" style="left:1078px;top:898px;font-size:14px;line-height:20px;color:#50565f;white-space:nowrap;-webkit-text-stroke:0.15px #50565f">取消</div>
<div class="abs" style="left:1140px;top:893px;width:68px;height:30px;border-radius:2px;background:#1f74fb"></div>
<div class="abs" style="left:1160px;top:898px;font-size:14px;line-height:20px;color:#fff;font-weight:bold;white-space:nowrap">保存</div>
<!-- /CONTENT -->
</body></html>
